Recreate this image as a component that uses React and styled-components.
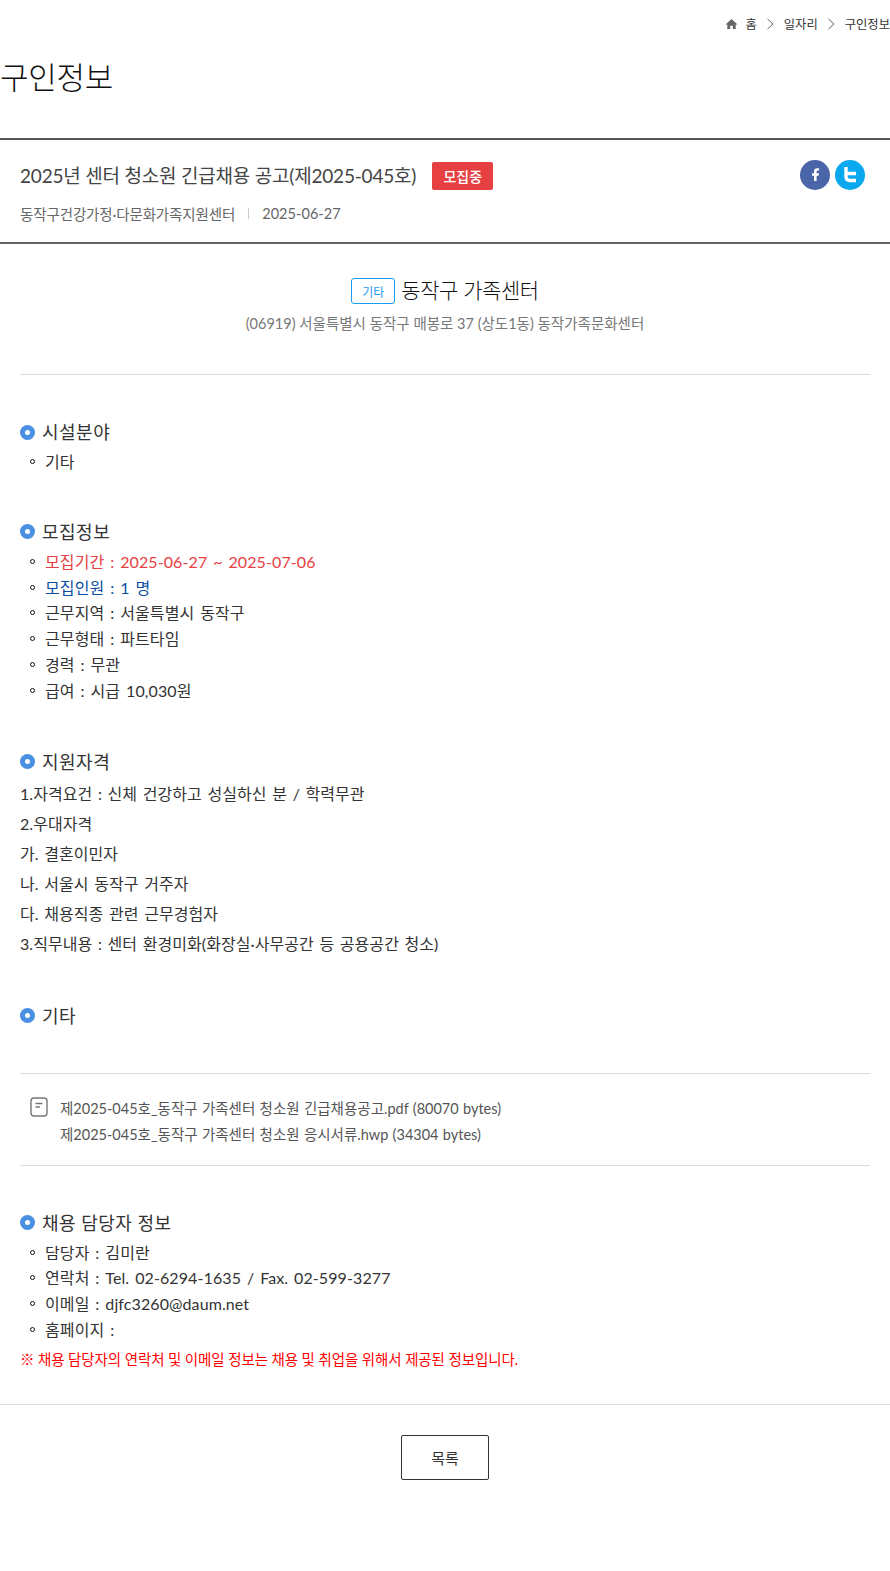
import React from "react";
import styled, { createGlobalStyle } from "styled-components";

const Global = createGlobalStyle`
  html, body { margin: 0; padding: 0; background: #fff; }
  body { font-family: Lato, "Noto Sans CJK KR", "Noto Sans", sans-serif; font-weight: 400; color: #333; overflow-x: hidden; }
  * { box-sizing: border-box; }
`;
const Page = styled.div`width: 890px; height: 1571px; overflow: hidden;`;
const Crumbs = styled.nav`
  height: 48px; display: flex; justify-content: flex-end; align-items: center; gap: 7px;
  font-size: 12.3px; color: #333;
`;
const Chev = styled.svg`width: 10px; height: 12px; margin: 0 1.5px; fill: none; stroke: #666; stroke-width: 1;`;
const PageTitle = styled.h1`
  margin: 0; padding-top: 5px; font-size: 31px; font-weight: 300; line-height: 48px;
  color: #111; letter-spacing: -0.3px; border-bottom: 2px solid #555; height: 92px;
`;
const Head = styled.header`
  height: 104px; border-bottom: 2px solid #666; padding: 21px 20px 0; position: relative;
`;
const HeadTitle = styled.div`display: flex; align-items: center; gap: 16px; height: 30px;`;
const HeadText = styled.h2`margin: 0 0 4px; font-size: 19px; font-weight: 400; color: #444; letter-spacing: -0.2px;`;
const Badge = styled.span`
  background: #e64043; color: #fff; font-size: 14px; font-weight: 500; border-radius: 2px;
  width: 61px; height: 28px; display: flex; align-items: center; justify-content: center;
`;
const Meta = styled.div`
  display: flex; align-items: center; margin-top: 10px; font-size: 14.5px; color: #666; letter-spacing: -0.12px; height: 24px;
`;
const MetaDate = styled.span`letter-spacing: 0.05px;`;
const Sep = styled.i`width: 1px; height: 11px; background: #ccc; margin: 0 13px;`;
const Social = styled.div`position: absolute; right: 25px; top: 20px; display: flex; gap: 5px;`;
const Round = styled.span`
  width: 30px; height: 30px; border-radius: 50%; background: ${p => p.$c};
  display: flex; align-items: center; justify-content: center;
`;
const Main = styled.main`padding: 0 20px;`;
const Org = styled.section`
  height: 131px; border-bottom: 1px solid #ddd; padding-top: 30px; text-align: center;
`;
const OrgLine = styled.div`display: flex; justify-content: center; align-items: center; gap: 6px; height: 34px;`;
const Tag = styled.span`
  width: 44px; height: 26px; border: 1px solid #1a9bec; border-radius: 3px; color: #1a9bec; font-size: 12px;
  display: flex; align-items: center; justify-content: center;
`;
const OrgName = styled.strong`margin-bottom: 5px; font-size: 21px; font-weight: 300; color: #111; letter-spacing: -0.45px;`;
const Addr = styled.div`margin-top: 4px; font-size: 14.5px; color: #777; line-height: 24px;`;
const Heading = styled.h3`
  margin: ${p => p.$top}px 0 1px; display: flex; align-items: center; gap: 7px; font-size: 18px; font-weight: 400;
  color: #333; height: 30px; letter-spacing: 0.5px;
`;
const HeadingLabel = styled.span`margin-top: -2px;`;
const Dot = styled.i`width: 15px; height: 15px; border-radius: 50%; background: #4a90e2; position: relative; display: block;
  &::after { content: ""; position: absolute; left: 5px; top: 5px; width: 5px; height: 5px; border-radius: 50%; background: #fff; }
`;
const List = styled.ul`margin: 0; padding: 0; list-style: none;`;
const Item = styled.li`
  height: 25.8px; line-height: 25.8px; padding: 1px 0 0 25px; font-size: 16px; letter-spacing: 0.1px; word-spacing: 1.7px; position: relative;
  color: ${p => p.$c || "#333"};
  &::before { content: ""; position: absolute; box-sizing: border-box; left: 10px; top: 11px; width: 5px; height: 5px; border: 1px solid #111; border-radius: 50%; }
`;
const Para = styled.p`margin: 0; height: 30px; padding-top: 1px; font-size: 16px; line-height: 30px; color: #333; letter-spacing: 0.05px; word-spacing: 1.5px;`;
const Files = styled.section`
  margin-top: 42px; height: 93px; border-top: 1px solid #ddd; border-bottom: 1px solid #ddd;
  padding: 22px 0 0 10px; display: flex; gap: 11px;
`;
const FileIcon = styled.svg`width: 19px; height: 21px; flex: none; margin-top: 1px; fill: none; stroke: #777; stroke-width: 1.4;`;
const FileList = styled.div`font-size: 14.5px; line-height: 26px; color: #555; word-spacing: 0.6px;`;
const Notice = styled.p`margin: 6px 0 0; font-size: 14.5px; line-height: 24px; color: #f00; letter-spacing: -0.1px;`;
const Foot = styled.div`
  margin-top: 32px; border-top: 1px solid #ddd; padding-top: 30px; display: flex; justify-content: center;
`;
const Btn = styled.button`
  width: 88px; height: 45px; background: #fff; border: 1px solid #333; border-radius: 2px;
  font: 400 15px "Noto Sans CJK KR", sans-serif; color: #333;
`;

const Section = ({ top, title, children }) => (
  <>
    <Heading $top={top}><Dot /><HeadingLabel>{title}</HeadingLabel></Heading>
    {children}
  </>
);

export default function App() {
  return (
    <Page>
      <Global />
      <Crumbs>
        <svg width="13" height="12" viewBox="0 0 13 12" fill="#666"><path d="M6.5 1 0.5 6.5H2.3V11H5.2V7.8H7.8V11H10.7V6.5H12.5Z" /></svg>
        <span>홈</span>
        <Chev viewBox="0 0 10 12"><path d="M2.5 1 8 6 2.5 11" /></Chev>
        <span>일자리</span>
        <Chev viewBox="0 0 10 12"><path d="M2.5 1 8 6 2.5 11" /></Chev>
        <span>구인정보</span>
      </Crumbs>
      <PageTitle>구인정보</PageTitle>
      <Head>
        <HeadTitle>
          <HeadText>2025년 센터 청소원 긴급채용 공고(제2025-045호)</HeadText>
          <Badge>모집중</Badge>
        </HeadTitle>
        <Meta>동작구건강가정·다문화가족지원센터<Sep /><MetaDate>2025-06-27</MetaDate></Meta>
        <Social>
          <Round $c="#4a65a8">
            <svg width="12" height="18" viewBox="0 0 12 18" fill="#fff"><path d="M7.6 15V9.8H9.600L10 7.300H7.600V5.700C7.600 5 7.900 4.600 8.800 4.600H10.100V2.400C9.800 2.400 9.200 2.300 8.300 2.300 6.300 2.300 5 3.500 5 5.500V7.300H3V9.800H5V15Z" /></svg>
          </Round>
          <Round $c="#0aa9ef">
            <svg width="16" height="18" viewBox="0 0 16 18" fill="none" stroke="#fff" strokeWidth="3.4"><path d="M4 1V10.500C4 13 5.500 14.500 8 14.500H14M4 7.500H14" /></svg>
          </Round>
        </Social>
      </Head>
      <Main>
        <Org>
          <OrgLine><Tag>기타</Tag><OrgName>동작구 가족센터</OrgName></OrgLine>
          <Addr>(06919) 서울특별시 동작구 매봉로 37 (상도1동) 동작가족문화센터</Addr>
        </Org>
        <Section top={42} title="시설분야">
          <List><Item>기타</Item></List>
        </Section>
        <Section top={43} title="모집정보">
          <List>
            <Item $c="#e64043">모집기간 : 2025-06-27 ~ 2025-07-06</Item>
            <Item $c="#0b4ea2">모집인원 : 1 명</Item>
            <Item>근무지역 : 서울특별시 동작구</Item>
            <Item>근무형태 : 파트타임</Item>
            <Item>경력 : 무관</Item>
            <Item>급여 : 시급 10,030원</Item>
          </List>
        </Section>
        <Section top={44} title="지원자격">
          <Para>1.자격요건 : 신체 건강하고 성실하신 분 / 학력무관</Para>
          <Para>2.우대자격</Para>
          <Para>가. 결혼이민자</Para>
          <Para>나. 서울시 동작구 거주자</Para>
          <Para>다. 채용직종 관련 근무경험자</Para>
          <Para>3.직무내용 : 센터 환경미화(화장실·사무공간 등 공용공간 청소)</Para>
        </Section>
        <Section top={43} title="기타" />
        <Files>
          <FileIcon viewBox="0 0 19 21"><rect x="1" y="1" width="16" height="18" rx="3" /><path d="M5.500 6.500H12.500M5.500 10H10" /></FileIcon>
          <FileList>
            <div>제2025-045호_동작구 가족센터 청소원 긴급채용공고.pdf (80070 bytes)</div>
            <div>제2025-045호_동작구 가족센터 청소원 응시서류.hwp (34304 bytes)</div>
          </FileList>
        </Files>
        <Section top={42} title="채용 담당자 정보">
          <List>
            <Item>담당자 : 김미란</Item>
            <Item>연락처 : Tel. 02-6294-1635 / Fax. 02-599-3277</Item>
            <Item>이메일 : djfc3260@daum.net</Item>
            <Item>홈페이지 :</Item>
          </List>
          <Notice>※ 채용 담당자의 연락처 및 이메일 정보는 채용 및 취업을 위해서 제공된 정보입니다.</Notice>
        </Section>
      </Main>
      <Foot><Btn>목록</Btn></Foot>
    </Page>
  );
}
